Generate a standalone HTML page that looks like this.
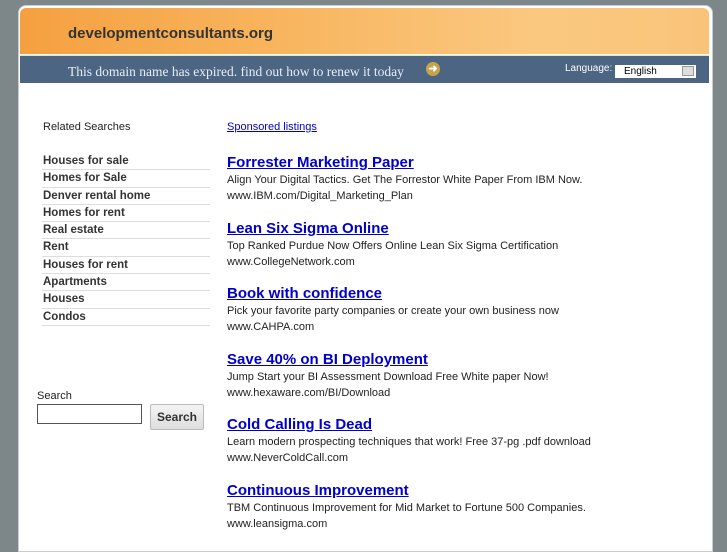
<!DOCTYPE html>
<html><head><style>
body{margin:0;width:727px;height:545px;background:#7d8688;font-family:"Liberation Sans",sans-serif;overflow:hidden;position:relative}
.box{position:absolute;left:18px;top:5px;width:693px;height:545px;background:#fff;border-radius:8px 8px 0 0;border:1px solid #c8ccce}
.hdr{position:absolute;left:20px;top:8px;width:689px;height:46px;border-radius:6px 6px 0 0;background:linear-gradient(90deg,#f5a040 0%,#f8b660 40%,#fbc880 75%,#f9c47a 100%)}
.hdr span{position:absolute;left:48px;top:17px;font-size:15px;font-weight:bold;color:#333}
.bar{position:absolute;left:20px;top:55px;width:689px;height:27px;background:#4b6583;border-top:1px solid #f5e0c0}
.bar .t{position:absolute;left:48px;top:8px;font-family:"Liberation Serif",serif;font-size:13.5px;color:#e8eef4}
.arr{position:absolute;left:406px;top:6px;width:14px;height:14px;border-radius:50%;background:#c9a34a;color:#fff;font-size:11px;line-height:14px;text-align:center;font-weight:bold}
.lang{position:absolute;left:545px;top:7px;font-size:10px;color:#fff}
.sel{position:absolute;left:595px;top:9px;width:81px;height:13px;background:#fff;font-size:10px;line-height:13px;padding-left:9px;box-sizing:border-box}
.sel i{position:absolute;right:2px;top:1px;width:12px;height:10px;background:#ddd;border:1px solid #999;box-sizing:border-box}
.rel{position:absolute;left:43px;top:121px;font-size:11px;color:#222}
ul{position:absolute;left:42px;top:153px;margin:0;padding:0;list-style:none;width:168px}
li{font-size:11.5px;font-weight:bold;color:#333;height:16.3px;line-height:16px;border-bottom:1px solid #ddd;padding-left:1px}
.sl{position:absolute;left:37px;top:390px;font-size:11px;color:#222}
.in{position:absolute;left:37px;top:404px;width:105px;height:20px;border:1px solid #555;box-sizing:border-box}
.btn{position:absolute;left:150px;top:404px;width:54px;height:26px;border:1px solid #bbb;border-radius:2px;background:linear-gradient(#f4f4f4,#ddd);font-size:12px;font-weight:bold;color:#333;text-align:center;line-height:24px;box-sizing:border-box}
.sp{position:absolute;left:227px;top:121px;font-size:11px;color:#00c;text-decoration:underline}
.ad{position:absolute;left:227px}
.ad a{display:block;font-size:15px;font-weight:bold;color:#00c;text-decoration:underline;height:19px}
.ad p{margin:0;font-size:11px;color:#222;line-height:15.5px}
</style></head><body>
<div class="box"></div>
<div class="hdr"><span>developmentconsultants.org</span></div>
<div class="bar"><div class="t">This domain name has expired. find out how to renew it today</div><div class="arr">➜</div><div class="lang">Language:</div><div class="sel">English<i></i></div></div>
<div class="rel">Related Searches</div>
<ul><li>Houses for sale</li><li>Homes for Sale</li><li>Denver rental home</li><li>Homes for rent</li><li>Real estate</li><li>Rent</li><li>Houses for rent</li><li>Apartments</li><li>Houses</li><li>Condos</li></ul>
<div class="sl">Search</div><div class="in"></div><div class="btn">Search</div>
<div class="sp">Sponsored listings</div>
<div class="ad" style="top:154px"><a>Forrester Marketing Paper</a><p>Align Your Digital Tactics. Get The Forrestor White Paper From IBM Now.</p><p>www.IBM.com/Digital_Marketing_Plan</p></div>
<div class="ad" style="top:220px"><a>Lean Six Sigma Online</a><p>Top Ranked Purdue Now Offers Online Lean Six Sigma Certification</p><p>www.CollegeNetwork.com</p></div>
<div class="ad" style="top:285px"><a>Book with confidence</a><p>Pick your favorite party companies or create your own business now</p><p>www.CAHPA.com</p></div>
<div class="ad" style="top:351px"><a>Save 40% on BI Deployment</a><p>Jump Start your BI Assessment Download Free White paper Now!</p><p>www.hexaware.com/BI/Download</p></div>
<div class="ad" style="top:416px"><a>Cold Calling Is Dead</a><p>Learn modern prospecting techniques that work! Free 37-pg .pdf download</p><p>www.NeverColdCall.com</p></div>
<div class="ad" style="top:482px"><a>Continuous Improvement</a><p>TBM Continuous Improvement for Mid Market to Fortune 500 Companies.</p><p>www.leansigma.com</p></div>
</body></html>
